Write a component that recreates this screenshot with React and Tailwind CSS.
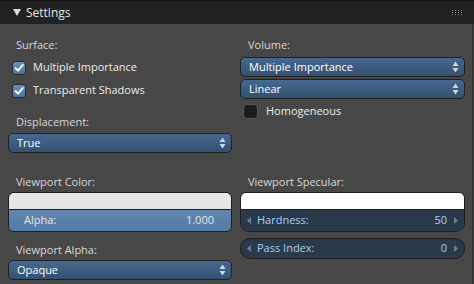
import React from 'react'

const font = { fontFamily: '"Open Sans", "DejaVu Sans", sans-serif' }

function Check({ checked }) {
    if (checked) {
        return (
            <div className="w-[14px] h-[14px] rounded-[3px] border border-[#2a2a2a] bg-gradient-to-b from-[#6b8fb8] to-[#4f739b] flex items-center justify-center">
                <svg width="12" height="12" viewBox="0 0 12 12">
                    <path d="M2.5 6.2 L5 8.7 L9.8 3" fill="none" stroke="#ffffff" strokeWidth="1.9" strokeLinecap="round" strokeLinejoin="round" />
                </svg>
            </div>
        )
    }
    return <div className="w-[15px] h-[15px] rounded-[4px] border border-[#5a5a5a] bg-[#1c1c1c]" />
}

function CheckRow({ checked, label, className = '' }) {
    return (
        <div className={`flex items-center gap-[7px] pl-[4px] ${className}`}>
            <Check checked={checked} />
            <span className="text-[11px] text-[#ececec]">{label}</span>
        </div>
    )
}

function Label({ children, className = '' }) {
    return <div className={`h-[20px] flex items-center pl-[8px] text-[11px] text-[#d8d8d8] ${className}`}>{children}</div>
}

function UpDown() {
    return (
        <svg width="7" height="12" viewBox="0 0 7 12">
            <path d="M3.5 0.5 L6.5 5 L0.5 5 Z" fill="#d0d6dc" />
            <path d="M3.5 11.5 L6.5 7 L0.5 7 Z" fill="#d0d6dc" />
        </svg>
    )
}

function Dropdown({ value, className = '' }) {
    return (
        <div className={`h-[20px] rounded-[5px] border border-[#202020] bg-gradient-to-b from-[#466991] to-[#33506f] flex items-center justify-between pl-[8px] pr-[5px] text-[11px] text-white ${className}`}>
            <span>{value}</span>
            <UpDown />
        </div>
    )
}

function Arrow({ dir }) {
    return (
        <svg width="4" height="7" viewBox="0 0 4 7">
            {dir === 'left'
                ? <path d="M4 0 L0 3.5 L4 7 Z" fill="#6f7f90" />
                : <path d="M0 0 L4 3.5 L0 7 Z" fill="#6f7f90" />}
        </svg>
    )
}

function NumField({ label, value, className = '' }) {
    return (
        <div className={`flex items-center justify-between px-[6px] text-[11px] text-[#a9cdf2] bg-[#2a3a4b] ${className}`}>
            <div className="flex items-center gap-[6px]">
                <Arrow dir="left" />
                <span>{label}</span>
            </div>
            <div className="flex items-center gap-[7px]">
                <span>{value}</span>
                <Arrow dir="right" />
            </div>
        </div>
    )
}

export default function App() {
    return (
        <div className="w-[474px] h-[284px] bg-[#474747] overflow-hidden relative" style={font}>
            <div className="h-[24px] bg-[#222222] border-t border-[#151515] flex items-center justify-between pl-[13px] pr-[12px]">
                <div className="flex items-center gap-[5px]">
                    <svg width="8" height="7" viewBox="0 0 8 7">
                        <path d="M0 0 L8 0 L4 7 Z" fill="#dcdcdc" />
                    </svg>
                    <span className="text-[12px] text-[#e4e4e4]">Settings</span>
                </div>
                <div className="grid grid-cols-4 gap-x-[2px] gap-y-[1px]">
                    {Array.from({ length: 12 }).map((_, i) => (
                        <span key={i} className="w-[1px] h-[1px] bg-[#8a8a8a]" />
                    ))}
                </div>
            </div>

            <div className="border-r border-[#2e2e2e] w-[473px] h-[260px] pl-[8px] pr-[7px]">
                <div className="grid grid-cols-[224px_225px] gap-x-[8px] pt-[11px]">
                    <div className="flex flex-col">
                        <Label>Surface:</Label>
                        <CheckRow checked label="Multiple Importance" className="h-[23px] mt-[1px]" />
                        <CheckRow checked label="Transparent Shadows" className="h-[23px]" />
                        <Label className="mt-[10px]">Displacement:</Label>
                        <Dropdown value="True" className="mt-[1px]" />
                    </div>
                    <div className="flex flex-col">
                        <Label>Volume:</Label>
                        <Dropdown value="Multiple Importance" className="mt-[2px]" />
                        <Dropdown value="Linear" className="mt-[2px]" />
                        <div className="h-[21px] mt-[2px] flex items-center gap-[8px] pl-[3px]">
                            <Check checked={false} />
                            <span className="text-[11px] text-[#ececec]">Homogeneous</span>
                        </div>
                    </div>
                </div>

                <div className="grid grid-cols-[224px_225px] gap-x-[8px] mt-[19px]">
                    <div className="flex flex-col">
                        <Label>Viewport Color:</Label>
                        <div className="rounded-[6px] border border-[#1e1e1e] overflow-hidden">
                            <div className="h-[17px] bg-[#e6e6e6] border-b border-[#1e1e1e]" />
                            <div className="h-[21px] bg-gradient-to-b from-[#6187b1] to-[#557aa3] flex items-center justify-between pl-[15px] pr-[17px] text-[11px] text-[#e6e6e6]">
                                <span>Alpha:</span>
                                <span>1.000</span>
                            </div>
                        </div>
                        <Label className="mt-[8px] h-[19px]">Viewport Alpha:</Label>
                        <Dropdown value="Opaque" />
                    </div>
                    <div className="flex flex-col">
                        <Label>Viewport Specular:</Label>
                        <div className="rounded-t-[6px] rounded-b-[9px] border border-[#1e1e1e] overflow-hidden">
                            <div className="h-[17px] bg-white border-b border-[#1e1e1e]" />
                            <NumField label="Hardness:" value="50" className="h-[21px]" />
                        </div>
                        <NumField label="Pass Index:" value="0" className="h-[21px] mt-[6px] rounded-[10px] border border-[#1e1e1e]" />
                    </div>
                </div>
            </div>
        </div>
    )
}
